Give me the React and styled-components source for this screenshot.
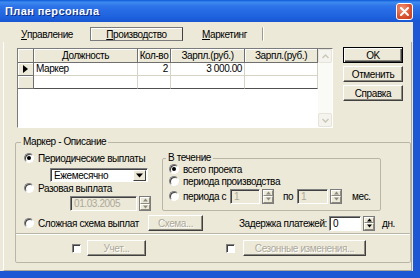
import styled, { createGlobalStyle } from "styled-components";

const GlobalStyle = createGlobalStyle`
  html, body { margin: 0; padding: 0; }
  body {
    background: #ece9d8;
    font-family: "Liberation Sans", Arial, sans-serif;
    font-size: 10px;
    letter-spacing: -0.4px;
    color: #000;
  }
  * { box-sizing: border-box; }
`;

const Window = styled.div`
  width: 420px;
  height: 278px;
  display: flex;
  flex-direction: column;
  overflow: hidden;
`;

const TitleBar = styled.div`
  height: 22px;
  flex: none;
  display: flex;
  align-items: center;
  justify-content: space-between;
  padding: 0 7px 0 5px;
  background: linear-gradient(180deg, #0c59d9 0%, #3d8af0 10%, #2c72e8 30%, #1f62de 75%, #1956d2 100%);
`;

const Title = styled.span`
  color: #fff;
  font-weight: bold;
  font-size: 11px;
  letter-spacing: 0.4px;
  text-shadow: 1px 1px 0 #0c2a86;
`;

const CloseButton = styled.div`
  width: 17px;
  height: 17px;
  border: 1px solid #fff;
  border-radius: 3px;
  background: radial-gradient(circle at 35% 30%, #f29274, #d9502f 60%, #c23a1e);
  display: flex;
  align-items: center;
  justify-content: center;
`;

const Frame = styled.div`
  flex: 1;
  min-height: 0;
  display: flex;
  flex-direction: column;
  background: #ece9d8;
  border-right: 7px solid #1d57d4;
  border-bottom: 7px solid #1d57d4;
`;

const TabStrip = styled.div`
  height: 20px;
  flex: none;
  display: flex;
  align-items: flex-start;
  padding: 5px 0 0 6px;
`;

const Tab = styled.div`
  width: ${(p) => p.$w}px;
  height: 14px;
  margin-left: ${(p) => p.$gap || 0}px;
  display: flex;
  align-items: center;
  justify-content: center;
  border: 1px solid ${(p) => (p.$active ? "#7b7b7b" : "transparent")};
  border-right-color: ${(p) => (p.$active ? "#404040" : p.$sep ? "#9d9a8c" : "transparent")};
  box-shadow: ${(p) => (p.$active ? "inset 1px 1px 0 #fff" : p.$sep ? "1px 0 0 #fff" : "none")};
`;

const Key = styled.span`
  text-decoration: underline;
`;

const Page = styled.div`
  flex: 1;
  margin: 0 1px 0 3px;
  border-left: 1px solid #fff;
  border-right: 1px solid #aca899;
  border-bottom: 1px solid #aca899;
  padding: 6px 0 0 11px;
  display: flex;
  flex-direction: column;
`;

const TopRow = styled.div`
  display: flex;
  align-items: flex-start;
`;

const DataGrid = styled.div`
  width: 316px;
  height: 80px;
  margin-left: 2px;
  display: flex;
  background: #fff;
  border: 1px solid;
  border-color: #7b7b7b #fff #fff #7b7b7b;
`;

const Cells = styled.div`
  flex: 1;
  display: grid;
  grid-template-columns: 16px 104px 33px 74px 73px;
  grid-template-rows: 14px 13px 13px;
  align-content: start;
`;

const HeadCell = styled.div`
  background: #ece9d8;
  border-right: 1px solid #6f6f6f;
  border-bottom: 1px solid #6f6f6f;
  box-shadow: inset 1px 1px 0 #fff;
  text-align: center;
  line-height: 13px;
  white-space: nowrap;
  overflow: hidden;
`;

const Indicator = styled(HeadCell)`
  display: flex;
  align-items: center;
  justify-content: center;
`;

const Cell = styled.div`
  border-right: 1px solid #d6d3c6;
  border-bottom: 1px solid ${(p) => (p.$last ? "#505050" : "#d6d3c6")};
  text-align: ${(p) => p.$align || "left"};
  padding: 0 2px;
  line-height: 12px;
  white-space: nowrap;
  overflow: hidden;
`;

const ScrollBar = styled.div`
  width: 14px;
  display: flex;
  flex-direction: column;
  justify-content: space-between;
  background: #fafaf6;
`;

const ScrollArrow = styled.div`
  height: 14px;
  background: #f4f3ee;
  border: 1px solid #e6e4d9;
  border-radius: 2px;
  display: flex;
  align-items: center;
  justify-content: center;
`;

const ButtonColumn = styled.div`
  display: flex;
  flex-direction: column;
  gap: 3px;
  margin: -1px 0 0 10px;
`;

const Button = styled.button`
  width: ${(p) => p.$w || 60}px;
  height: 16px;
  flex: none;
  padding: 0;
  font: inherit;
  font-size: 10px;
  letter-spacing: -0.4px;
  background: #ece9d8;
  color: ${(p) => (p.disabled ? "#aca899" : "#000")};
  text-shadow: ${(p) => (p.disabled ? "1px 1px 0 #fff" : "none")};
  border: 1px solid;
  border-color: ${(p) => (p.$default ? "#000" : "#fff #404040 #404040 #fff")};
  box-shadow: ${(p) =>
    p.$default
      ? "inset 1px 1px 0 #fff, inset -1px -1px 0 #404040, inset -2px -2px 0 #8c8a7e"
      : "inset -1px -1px 0 #8c8a7e"};
`;

const GroupBox = styled.fieldset`
  margin: ${(p) => p.$mt || 0}px 0 0 0;
  padding: 0;
  min-width: 0;
  width: ${(p) => (p.$w ? `${p.$w}px` : "auto")};
  border: 1px solid #b9b6a8;
  border-radius: 2px;
`;

const Legend = styled.legend`
  padding: 0 2px;
  margin-left: ${(p) => p.$ml || 5}px;
  line-height: 12px;
  font-size: 10px;
`;

const Main = styled.div`
  display: grid;
  grid-template-columns: 138px 219px;
  row-gap: 4px;
  padding: 4px 0 2px 8px;
`;

const LeftStack = styled.div`
  display: flex;
  flex-direction: column;
`;

const RadioRow = styled.div`
  display: flex;
  align-items: center;
  height: ${(p) => p.$h || 12}px;
  width: ${(p) => (p.$w ? `${p.$w}px` : "auto")};
  flex: none;
  white-space: nowrap;
`;

const Radio = styled.span`
  width: 10px;
  height: 10px;
  flex: none;
  margin-right: 4px;
  border-radius: 50%;
  background: #fff;
  border: 1px solid;
  border-color: #808080 #fff #fff #808080;
  box-shadow: inset 1px 1px 0 #404040;
  display: flex;
  align-items: center;
  justify-content: center;

  &::after {
    content: "";
    width: 4px;
    height: 4px;
    border-radius: 50%;
    background: ${(p) => (p.$checked ? "#000" : "transparent")};
  }
`;

const CheckBox = styled.span`
  width: 9px;
  height: 9px;
  flex: none;
  background: #fff;
  border: 1px solid;
  border-color: #808080 #fff #fff #808080;
  box-shadow: inset 1px 1px 0 #404040;
`;

const Field = styled.div`
  width: ${(p) => p.$w}px;
  height: ${(p) => p.$h || 15}px;
  flex: none;
  display: flex;
  align-items: center;
  padding-left: 3px;
  background: ${(p) => (p.$disabled ? "#ece9d8" : "#fff")};
  color: ${(p) => (p.$disabled ? "#aca899" : "#000")};
  border: 1px solid;
  border-color: #808080 #fff #fff #808080;
  box-shadow: inset 1px 1px 0 #404040;
`;

const Combo = styled(Field)`
  margin: 4px 0 0 26px;
  justify-content: space-between;
  padding-right: 1px;
`;

const ComboArrow = styled.div`
  width: 13px;
  height: 11px;
  background: #ece9d8;
  border: 1px solid;
  border-color: #fff #404040 #404040 #fff;
  display: flex;
  align-items: center;
  justify-content: center;
`;

const SpinGroup = styled.div`
  display: flex;
  align-items: center;
  gap: 2px;
  flex: none;
  margin-left: ${(p) => p.$ml || 0}px;
  margin-top: ${(p) => p.$mt || 0}px;
`;

const Spin = styled.div`
  width: ${(p) => p.$w || 12}px;
  height: 15px;
  display: flex;
  flex-direction: column;
  border: 1px solid #7b7b7b;
`;

const SpinHalf = styled.div`
  flex: 1;
  background: #ece9d8;
  border: 1px solid;
  border-color: #fff #8c8a7e #8c8a7e #fff;
  display: flex;
  align-items: center;
  justify-content: center;
`;

const PeriodGrid = styled.div`
  display: grid;
  grid-template-rows: 10px 14px 16px;
  padding-left: 6px;
`;

const Text = styled.span`
  flex: none;
  white-space: nowrap;
  width: ${(p) => (p.$w ? `${p.$w}px` : "auto")};
  margin-left: ${(p) => p.$ml || 0}px;
  text-align: ${(p) => p.$align || "left"};
`;

const BottomRow = styled.div`
  grid-column: 1 / -1;
  height: 16px;
  display: flex;
  align-items: center;
`;

const Footer = styled.div`
  height: 29px;
  border-top: 1px solid #b9b6a8;
  box-shadow: inset 0 1px 0 #fff;
  display: flex;
  align-items: center;
  padding: 0 0 0 56px;
`;

const FooterItem = styled.div`
  display: flex;
  align-items: center;
  gap: ${(p) => p.$gap}px;
  margin-left: ${(p) => p.$ml || 0}px;
`;

const Triangle = ({ dir = "down", color = "#000", size = 7 }) => (
  <svg width={size} height={Math.ceil(size / 2) + 1} viewBox="0 0 7 4">
    {dir === "down" ? (
      <polygon points="0,0 7,0 3.5,4" fill={color} />
    ) : (
      <polygon points="0,4 7,4 3.5,0" fill={color} />
    )}
  </svg>
);

const Chevron = ({ dir }) => (
  <svg width="7" height="5" viewBox="0 0 7 5">
    <polyline
      points={dir === "up" ? "0.5,4 3.5,1 6.5,4" : "0.5,1 3.5,4 6.5,1"}
      fill="none"
      stroke="#c9c6b6"
      strokeWidth="1.4"
    />
  </svg>
);

const SpinEdit = ({ value, w, spinW, disabled, ml, mt }) => (
  <SpinGroup $ml={ml} $mt={mt}>
    <Field $w={w} $disabled={disabled}>
      {value}
    </Field>
    <Spin $w={spinW}>
      <SpinHalf>
        <Triangle dir="up" size={5} color={disabled ? "#8c8a7e" : "#000"} />
      </SpinHalf>
      <SpinHalf>
        <Triangle dir="down" size={5} color={disabled ? "#8c8a7e" : "#000"} />
      </SpinHalf>
    </Spin>
  </SpinGroup>
);

const App = () => {
  return (
    <Window>
      <GlobalStyle />
      <TitleBar>
        <Title>План персонала</Title>
        <CloseButton>
          <svg width="9" height="9" viewBox="0 0 9 9">
            <path d="M1 1 L8 8 M8 1 L1 8" stroke="#fff" strokeWidth="2" strokeLinecap="round" />
          </svg>
        </CloseButton>
      </TitleBar>
      <Frame>
        <TabStrip>
          <Tab $w={82}>
            <Key>У</Key>правление
          </Tab>
          <Tab $w={93} $gap={2} $active>
            <Key>П</Key>роизводство
          </Tab>
          <Tab $w={77} $gap={3} $sep>
            <Key>М</Key>аркетинг
          </Tab>
        </TabStrip>
        <Page>
          <TopRow>
            <DataGrid>
              <Cells>
                <HeadCell />
                <HeadCell>Должность</HeadCell>
                <HeadCell>Кол-во</HeadCell>
                <HeadCell>Зарпл.(руб.)</HeadCell>
                <HeadCell>Зарпл.(руб.)</HeadCell>

                <Indicator>
                  <svg width="5" height="8" viewBox="0 0 5 8">
                    <polygon points="0,0 5,4 0,8" fill="#000" />
                  </svg>
                </Indicator>
                <Cell>Маркер</Cell>
                <Cell $align="right">2</Cell>
                <Cell $align="right">3 000.00</Cell>
                <Cell />

                <Indicator />
                <Cell $last />
                <Cell $last />
                <Cell $last />
                <Cell $last />
              </Cells>
              <ScrollBar>
                <ScrollArrow>
                  <Chevron dir="up" />
                </ScrollArrow>
                <ScrollArrow>
                  <Chevron dir="down" />
                </ScrollArrow>
              </ScrollBar>
            </DataGrid>
            <ButtonColumn>
              <Button $default>OK</Button>
              <Button>Отменить</Button>
              <Button>Справка</Button>
            </ButtonColumn>
          </TopRow>

          <GroupBox $mt={8}>
            <Legend>Маркер - Описание</Legend>
            <Main>
              <LeftStack>
                <RadioRow>
                  <Radio $checked />
                  Периодические выплаты
                </RadioRow>
                <Combo $w={98} $h={14}>
                  Ежемесячно
                  <ComboArrow>
                    <Triangle size={7} />
                  </ComboArrow>
                </Combo>
                <RadioRow>
                  <Radio />
                  Разовая выплата
                </RadioRow>
                <SpinEdit value="01.03.2005" w={67} spinW={12} disabled ml={46} mt={2} />
              </LeftStack>

              <GroupBox $w={219}>
                <Legend $ml={3}>В течение</Legend>
                <PeriodGrid>
                  <RadioRow $h={10}>
                    <Radio $checked />
                    всего проекта
                  </RadioRow>
                  <RadioRow $h={14}>
                    <Radio />
                    периода производства
                  </RadioRow>
                  <RadioRow $h={16}>
                    <Radio />
                    <Text $w={47}>периода с</Text>
                    <SpinEdit value="1" w={30} spinW={12} disabled />
                    <Text $ml={9} $w={14}>по</Text>
                    <SpinEdit value="1" w={31} spinW={12} disabled />
                    <Text $ml={10}>мес.</Text>
                  </RadioRow>
                </PeriodGrid>
              </GroupBox>

              <BottomRow>
                <RadioRow $w={124}>
                  <Radio />
                  Сложная схема выплат
                </RadioRow>
                <Button disabled $w={55}>
                  Схема...
                </Button>
                <Text $ml={29} $w={95} $align="right">
                  Задержка платежей:
                </Text>
                <SpinEdit value="0" w={32} spinW={12} ml={2} />
                <Text $ml={7}>дн.</Text>
              </BottomRow>
            </Main>
            <Footer>
              <FooterItem $gap={6}>
                <CheckBox />
                <Button disabled $w={59}>
                  Учет...
                </Button>
              </FooterItem>
              <FooterItem $gap={8} $ml={80}>
                <CheckBox />
                <Button disabled $w={123}>
                  Сезонные изменения...
                </Button>
              </FooterItem>
            </Footer>
          </GroupBox>
        </Page>
      </Frame>
    </Window>
  );
};

export default App;
